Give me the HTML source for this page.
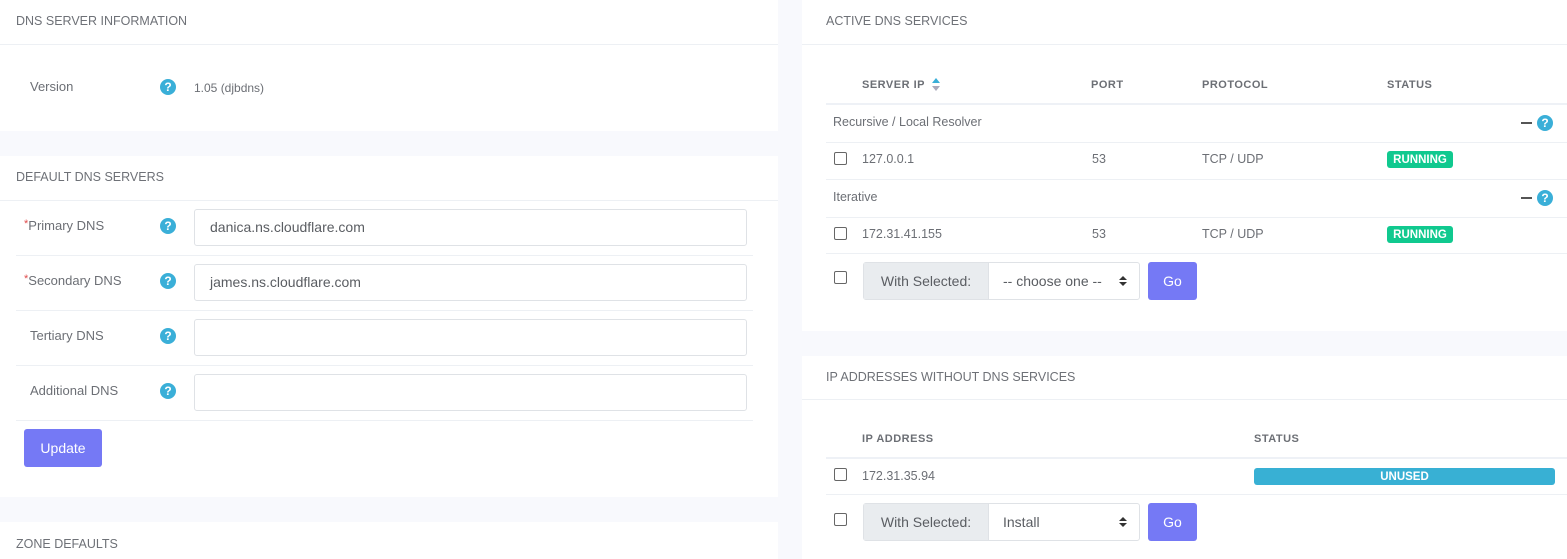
<!DOCTYPE html>
<html style="height:559px;overflow:hidden"><head><meta charset="utf-8"><style>
*{box-sizing:border-box;margin:0;padding:0}
html,body{width:1567px;height:559px;overflow:hidden}
body{background:#f8f9fd;font-family:"Liberation Sans",sans-serif;color:#6c6f75;position:relative;font-size:13px}
.card{position:absolute;background:#fff}
.a{position:absolute;white-space:nowrap}
.h{font-size:12.5px;color:#6e7177;letter-spacing:0}
.line{position:absolute;height:1px;background:#edf0f4}
.hl{position:absolute;height:2px;background:#eef1f6}
.q{position:absolute;width:16px;height:16px;border-radius:50%;background:#3aafd8;color:#fff;font-weight:bold;font-size:12px;text-align:center;line-height:16px}
.inp{position:absolute;border:1px solid #dfe2e6;border-radius:3px;background:#fff;font-size:14px;color:#5a5d62;padding-left:15px;line-height:35px}
.btn{position:absolute;background:#7579f5;color:#fff;border-radius:3px;text-align:center;font-size:14px}
.cb{position:absolute;width:13px;height:13px;border:1px solid #666;border-radius:2px;background:#fff}
.th{font-size:11px;font-weight:bold;color:#6c6f75;letter-spacing:.5px}
.badge{position:absolute;background:#10c98f;color:#fff;font-weight:bold;font-size:11.5px;border-radius:3px;text-align:center;height:17px;line-height:18px}
.grp{position:absolute;height:38px;border:1px solid #dfe2e6;border-radius:3px;background:#fff;display:flex;font-size:14px}
.grp .l{background:#e9ecef;color:#5a5d62;width:125px;text-align:center;line-height:36px;border-right:1px solid #dfe2e6}
.grp .s{flex:1;padding-left:14px;line-height:36px;color:#5a5d62;position:relative}
.grp .s:after{content:"";position:absolute;right:12px;top:13px;border:4px solid transparent;border-bottom:4px solid #333;border-top:0}
.grp .s:before{content:"";position:absolute;right:12px;top:19px;border:4px solid transparent;border-top:4px solid #333;border-bottom:0}
.dash{position:absolute;width:11px;height:2px;background:#555}
.r{font-size:12.5px}
</style></head><body>

<div class="card" style="left:0;top:0;width:778px;height:131px">
<div class="a h" style="left:16px;top:14px">DNS SERVER INFORMATION</div>
<div class="line" style="left:0;top:44px;width:778px"></div>
<div class="a" style="left:30px;top:79px">Version</div>
<div class="q" style="left:160px;top:79px">?</div>
<div class="a" style="left:194px;top:81px;font-size:12px">1.05 (djbdns)</div>
</div>

<div class="card" style="left:0;top:156px;width:778px;height:341px">
<div class="a h" style="left:16px;top:14px">DEFAULT DNS SERVERS</div>
<div class="line" style="left:0;top:44px;width:778px"></div>
<div class="a" style="left:24px;top:62px"><span style="color:#e04b4b;font-size:11px;vertical-align:top">*</span>Primary DNS</div>
<div class="q" style="left:160px;top:62px">?</div>
<div class="inp" style="left:194px;top:53px;width:553px;height:37px">danica.ns.cloudflare.com</div>
<div class="line" style="left:16px;top:99px;width:737px"></div>
<div class="a" style="left:24px;top:117px"><span style="color:#e04b4b;font-size:11px;vertical-align:top">*</span>Secondary DNS</div>
<div class="q" style="left:160px;top:117px">?</div>
<div class="inp" style="left:194px;top:108px;width:553px;height:37px">james.ns.cloudflare.com</div>
<div class="line" style="left:16px;top:154px;width:737px"></div>
<div class="a" style="left:30px;top:172px">Tertiary DNS</div>
<div class="q" style="left:160px;top:172px">?</div>
<div class="inp" style="left:194px;top:163px;width:553px;height:37px"></div>
<div class="line" style="left:16px;top:209px;width:737px"></div>
<div class="a" style="left:30px;top:227px">Additional DNS</div>
<div class="q" style="left:160px;top:227px">?</div>
<div class="inp" style="left:194px;top:218px;width:553px;height:37px"></div>
<div class="line" style="left:16px;top:264px;width:737px"></div>
<div class="btn" style="left:24px;top:273px;width:78px;height:38px;line-height:38px">Update</div>
</div>

<div class="card" style="left:0;top:522px;width:778px;height:37px">
<div class="a h" style="left:16px;top:15px">ZONE DEFAULTS</div>
</div>

<div class="card" style="left:802px;top:0;width:765px;height:331px">
<div class="a h" style="left:24px;top:14px">ACTIVE DNS SERVICES</div>
<div class="line" style="left:0;top:44px;width:765px"></div>
<div class="a th" style="left:60px;top:79px">SERVER IP</div>
<div class="a" style="left:130px;top:78px;width:0;height:0;border:4px solid transparent;border-bottom:5px solid #3aafd8;border-top:0"></div>
<div class="a" style="left:130px;top:86px;width:0;height:0;border:4px solid transparent;border-top:5px solid #aab;border-bottom:0"></div>
<div class="a th" style="left:289px;top:79px">PORT</div>
<div class="a th" style="left:400px;top:79px">PROTOCOL</div>
<div class="a th" style="left:585px;top:79px">STATUS</div>
<div class="hl" style="left:24px;top:103px;width:741px"></div>
<div class="a" style="left:31px;top:115px;font-size:12.5px">Recursive / Local Resolver</div>
<div class="dash" style="left:719px;top:122px"></div>
<div class="q" style="left:735px;top:115px">?</div>
<div class="line" style="left:24px;top:142px;width:741px"></div>
<div class="cb" style="left:32px;top:152px"></div>
<div class="a r" style="left:60px;top:152px">127.0.0.1</div>
<div class="a r" style="left:290px;top:152px">53</div>
<div class="a r" style="left:400px;top:152px">TCP / UDP</div>
<div class="badge" style="left:585px;top:151px;width:66px">RUNNING</div>
<div class="line" style="left:24px;top:179px;width:741px"></div>
<div class="a" style="left:31px;top:190px;font-size:12.5px">Iterative</div>
<div class="dash" style="left:719px;top:197px"></div>
<div class="q" style="left:735px;top:190px">?</div>
<div class="line" style="left:24px;top:217px;width:741px"></div>
<div class="cb" style="left:32px;top:227px"></div>
<div class="a r" style="left:60px;top:227px">172.31.41.155</div>
<div class="a r" style="left:290px;top:227px">53</div>
<div class="a r" style="left:400px;top:227px">TCP / UDP</div>
<div class="badge" style="left:585px;top:226px;width:66px">RUNNING</div>
<div class="line" style="left:24px;top:253px;width:741px"></div>
<div class="cb" style="left:32px;top:271px"></div>
<div class="grp" style="left:61px;top:262px;width:277px"><div class="l">With Selected:</div><div class="s">-- choose one --</div></div>
<div class="btn" style="left:346px;top:262px;width:49px;height:38px;line-height:38px">Go</div>
</div>

<div class="card" style="left:802px;top:356px;width:765px;height:203px">
<div class="a h" style="left:24px;top:14px">IP ADDRESSES WITHOUT DNS SERVICES</div>
<div class="line" style="left:0;top:43px;width:765px"></div>
<div class="a th" style="left:60px;top:77px">IP ADDRESS</div>
<div class="a th" style="left:452px;top:77px">STATUS</div>
<div class="hl" style="left:24px;top:101px;width:741px"></div>
<div class="cb" style="left:32px;top:112px"></div>
<div class="a r" style="left:60px;top:113px">172.31.35.94</div>
<div class="badge" style="left:452px;top:112px;width:301px;background:#38b0d4">UNUSED</div>
<div class="line" style="left:24px;top:138px;width:741px"></div>
<div class="cb" style="left:32px;top:157px"></div>
<div class="grp" style="left:61px;top:147px;width:277px"><div class="l">With Selected:</div><div class="s">Install</div></div>
<div class="btn" style="left:346px;top:147px;width:49px;height:38px;line-height:38px">Go</div>
</div>

</body></html>
